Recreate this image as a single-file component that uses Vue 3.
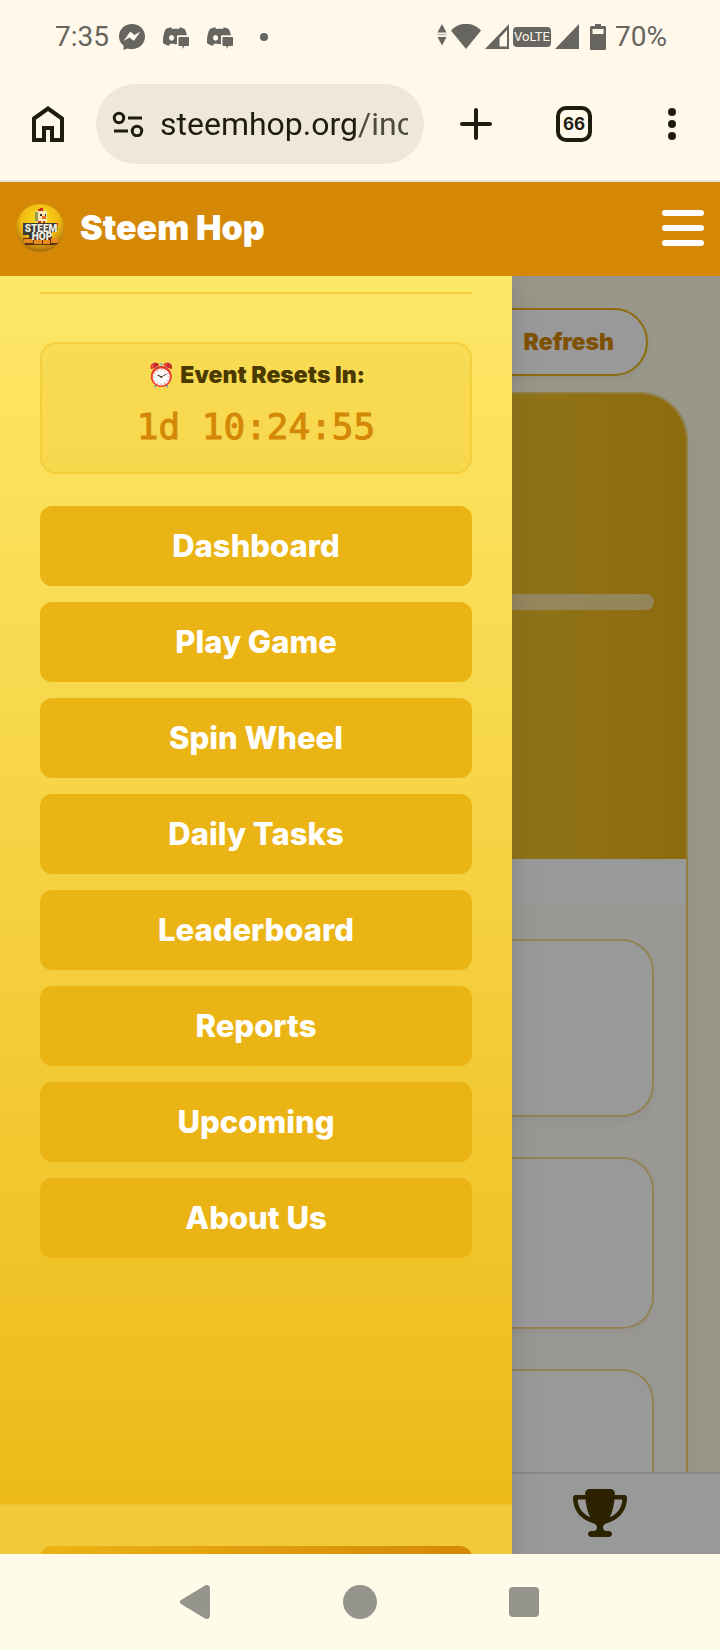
<script setup>
import { ref } from "vue";

const url = ref("steemhop.org/inc");
const menuOpen = ref(true);

const links = [
    "Dashboard",
    "Play Game",
    "Spin Wheel",
    "Daily Tasks",
    "Leaderboard",
    "Reports",
    "Upcoming",
    "About Us",
];
</script>

<template>
    <div class="phone">
        <div class="status">
            <div class="status-left">
                <span>7:35</span>
                <div class="notifications">
                    <svg width="26" height="26" viewBox="0 0 26 26">
                        <path
                            fill="currentColor"
                            d="M13 0C5.600 0 0 5.400 0 12.500c0 3.800 1.700 7 4.600 9.200V26l4-1.600c1.400.4 2.900.6 4.400.6 7.400 0 13-5.300 13-12.500S20.400 0 13 0z"
                        />
                        <path
                            fill="#fff8eb"
                            d="M4.500 17l6-8.500c.5-.6 1-.7 1.700-.2l3.300 2.700 6-3.500-6 8.500c-.5.6-1 .7-1.700.2L10.500 13.500z"
                        />
                    </svg>
                    <svg v-for="n in 2" :key="n" width="28" height="26" viewBox="0 0 28 26">
                        <path
                            fill="currentColor"
                            fill-rule="evenodd"
                            d="M9 3.500C6.500 4 4.800 5 4.800 5 2.800 8.500 1.800 13 2 19c1.500 1.600 4 2.500 6.200 2.600l1.200-2c1.600.4 4 .6 6.600.5v-7.600c0-.7.500-1.200 1.200-1.200H26C25.400 8.700 24.700 6.800 23.700 5 22 4.100 20.400 3.600 18.800 3.300l-.8 1.600c-2-.3-5-.3-7 0L10.400 3.300zM10.500 11a2.600 2.900 0 1 0 .1 0z"
                        />
                        <path fill="currentColor" d="M18.500 13H27c.7 0 1 .4 1 1v7c0 .6-.4 1-1 1h-3.500L21.500 25v-3h-3c-.6 0-1-.4-1-1v-7c0-.6.400-1 1-1z" />
                    </svg>
                    <svg width="30" height="26" viewBox="0 0 30 26">
                        <circle cx="15" cy="13" r="4" fill="currentColor" />
                    </svg>
                </div>
            </div>
            <div class="status-right">
                <svg width="10" height="26" viewBox="0 0 10 26" fill="currentColor">
                    <path d="M5 0l4.500 8.500h-9zM5 21.500L.5 13h9z" />
                    <path d="M.5 9.800h9v1.600h-9z" opacity=".4" />
                </svg>
                <svg width="30" height="26" viewBox="0 0 30 26" fill="currentColor">
                    <path d="M0 6.500C8-2.500 22-2.500 30 6.500L15 25z" />
                </svg>
                <svg width="24" height="26" viewBox="0 0 24 26">
                    <path fill="currentColor" fill-rule="evenodd" d="M24 0v25H0zM22 6l-7.500 8v8.500H22z" />
                </svg>
                <span class="volte">VoLTE</span>
                <svg width="24" height="26" viewBox="0 0 24 26">
                    <path fill="currentColor" d="M24 0v25H0z" />
                </svg>
                <svg width="28" height="26" viewBox="0 0 28 26">
                    <path
                        fill="currentColor"
                        fill-rule="evenodd"
                        d="M12 0h6v2h3.500c1 0 1.500.5 1.500 1.500v21c0 1-.5 1.500-1.500 1.500h-13C7.500 26 7 25.500 7 24.500v-21C7 2.500 7.500 2 8.500 2H12zM9.500 5v5h11V5z"
                    />
                </svg>
                <span>70%</span>
            </div>
        </div>

        <div class="toolbar">
            <button class="icon-btn" aria-label="Home">
                <svg width="32" height="36" viewBox="0 0 32 36" fill="none" stroke="currentColor" stroke-width="4">
                    <path d="M2 12.500L16 2.500l14 10V34H20V22h-8v12H2z" />
                </svg>
            </button>
            <label class="address">
                <svg width="32" height="26" viewBox="0 0 32 26" fill="none" stroke="currentColor" stroke-width="3">
                    <circle cx="7" cy="7" r="4.700" />
                    <circle cx="25" cy="20" r="4.700" />
                    <path d="M16 7h14M2 20h14" />
                </svg>
                <input v-model="url" type="text" aria-label="Address" />
            </label>
            <div class="actions">
                <button class="icon-btn" aria-label="New tab">
                    <svg width="32" height="32" viewBox="0 0 32 32" stroke="currentColor" stroke-width="4" stroke-linecap="round">
                        <path d="M16 2v28M2 16h28" />
                    </svg>
                </button>
                <button class="icon-btn"><span class="tab-count">66</span></button>
                <button class="icon-btn" aria-label="Menu">
                    <svg width="12" height="32" viewBox="0 0 12 32" fill="currentColor">
                        <circle cx="6" cy="4" r="4" />
                        <circle cx="6" cy="16" r="4" />
                        <circle cx="6" cy="28" r="4" />
                    </svg>
                </button>
            </div>
        </div>

        <header class="header">
            <svg class="logo" width="48" height="48" viewBox="0 0 48 48">
                <defs>
                    <radialGradient id="ball" cx=".5" cy=".35" r=".65">
                        <stop offset="0" stop-color="#ffe21c" />
                        <stop offset=".6" stop-color="#f0b912" />
                        <stop offset="1" stop-color="#a86c0c" />
                    </radialGradient>
                </defs>
                <circle cx="24" cy="24" r="24" fill="url(#ball)" />
                <path fill="#d42a1c" d="M22 5h2V4h3v3h-5z" />
                <path fill="#f6e7b4" d="M20 7h11v11H20z" />
                <path fill="#9a9a54" d="M19 8h3v9h-3z" />
                <path fill="#3a2a1a" d="M24 10h2v2h-2zM29 10h1v2h-1z" />
                <path fill="#e8731c" d="M26 12h4v3h-4z" />
                <path fill="#c4351c" d="M22 17h3v3h-3zM27 17h2v3h-2z" />
                <path fill="#3c3c34" d="M7 19h34v9h-5v8H13v-5H7z" />
                <path fill="#b53a20" d="M40 19h2v3h-2z" />
                <path fill="#5b8a32" d="M40 23h2v3h-2z" />
                <path fill="#5b3210" d="M7 34h35v6l-4 1H9z" />
                <path fill="#e88a1c" d="M8 35h9v4H8zM18 36h8v4h-8zM27 36h7v4h-7zM35 34h7v5h-7z" />
                <text x="25" y="28" text-anchor="middle" font-size="10">STEEM</text>
                <text x="26" y="36" text-anchor="middle" font-size="10">HOP</text>
            </svg>
            <h1>Steem Hop</h1>
            <button class="burger" aria-label="Toggle menu" @click="menuOpen = !menuOpen">
                <span></span>
                <span></span>
                <span></span>
            </button>
        </header>

        <div class="stage">
            <main class="page">
                <button class="refresh">Refresh</button>
                <section class="card">
                    <div class="hero">
                        <div class="progress"></div>
                    </div>
                    <div class="strip"></div>
                    <div class="panels">
                        <div class="panel tall"></div>
                        <div class="panel"></div>
                        <div class="panel"></div>
                    </div>
                </section>
            </main>

            <nav class="tabbar">
                <button aria-label="Leaderboard">
                    <svg width="54" height="48" viewBox="0 0 576 512" fill="currentColor">
                        <path
                            d="M400 0H176c-26.500 0-48.100 21.800-47.100 48.200c.2 5.300 .4 10.600 .7 15.800H24C10.700 64 0 74.700 0 88c0 92.600 33.500 157 78.500 200.700c44.300 43.100 98.300 64.800 138.100 75.800c23.400 6.500 39.400 26 39.400 45.600c0 20.900-17 37.900-37.900 37.900H192c-17.700 0-32 14.300-32 32s14.300 32 32 32H384c17.700 0 32-14.300 32-32s-14.300-32-32-32H357.900C337 448 320 431 320 410.100c0-19.600 15.900-39.200 39.400-45.600c39.900-11 93.900-32.700 138.200-75.800C542.500 245 576 180.600 576 88c0-13.300-10.700-24-24-24H446.400c.3-5.200 .5-10.400 .7-15.800C448.100 21.800 426.500 0 400 0zM48.900 112h84.400c9.100 90.100 29.200 150.300 51.900 190.600c-24.900-11-50.800-26.500-73.200-48.300c-32-31.100-58-76-63-142.300zM464.100 254.300c-22.400 21.800-48.300 37.300-73.200 48.300c22.700-40.300 42.800-100.500 51.900-190.600h84.400c-5.100 66.300-31.100 111.200-63 142.300z"
                        />
                    </svg>
                </button>
            </nav>

            <div v-if="menuOpen" class="overlay" @click="menuOpen = false"></div>

            <aside v-if="menuOpen" class="sidebar">
                <div class="sidebar-body">
                    <hr />
                    <div class="countdown">
                        <div class="countdown-label">⏰ Event Resets In:</div>
                        <div class="countdown-time">1d 10:24:55</div>
                    </div>
                    <nav class="links">
                        <button v-for="link in links" :key="link">{{ link }}</button>
                    </nav>
                </div>
                <div class="sidebar-footer">
                    <button aria-label="Account"></button>
                </div>
            </aside>
        </div>

        <div class="android-nav">
            <button aria-label="Back">
                <svg width="32" height="36" viewBox="0 0 32 36">
                    <path
                        fill="currentColor"
                        d="M1 16L25 1.500c2.500-1.200 5 0 5 3v27c0 3-2.500 4.200-5 3L1 20c-1.500-1-1.500-3 0-4z"
                    />
                </svg>
            </button>
            <button aria-label="Home"><span class="dot"></span></button>
            <button aria-label="Recent apps"><span class="square"></span></button>
        </div>
    </div>
</template>

<style>
    body {
        margin: 0;
    }
</style>

<style scoped>
    .phone {
        --gold: #ebb415;
        --amber: #d48806;
        --brown: #4a3a00;

        display: flex;
        flex-direction: column;
        height: 100vh;
        overflow: hidden;
        background: #fff8eb;
        font-family: Inter, "Liberation Sans", sans-serif;
    }
    .phone * {
        box-sizing: border-box;
    }
    svg {
        display: block;
        flex: none;
    }
    button {
        padding: 0;
        border: 0;
        background: none;
        color: inherit;
        font: inherit;
        cursor: pointer;
    }

    /* System status bar */
    .status {
        display: flex;
        flex: none;
        justify-content: space-between;
        align-items: center;
        height: 74px;
        padding: 0 53px 0 55px;
        color: #66655f;
        font: 28px/32px Roboto, sans-serif;
    }
    .status-left,
    .status-right,
    .notifications {
        display: flex;
        align-items: center;
    }
    .status-left {
        gap: 10px;
    }
    .notifications {
        gap: 16px;
    }
    .status-right {
        gap: 4px;
    }
    .volte {
        width: 38px;
        border-radius: 4px;
        background: #66655f;
        color: #fff8eb;
        font: 13px/20px Roboto, sans-serif;
        text-align: center;
    }

    /* Browser toolbar */
    .toolbar {
        display: flex;
        flex: none;
        align-items: center;
        height: 108px;
        padding-bottom: 6px;
        border-bottom: 2px solid #e7e2d6;
        color: #1e1c10;
    }
    .icon-btn {
        display: grid;
        place-items: center;
        min-width: 96px;
        height: 80px;
    }
    .address {
        display: flex;
        flex: 1;
        align-items: center;
        gap: 16px;
        min-width: 0;
        height: 80px;
        padding: 0 16px;
        border-radius: 40px;
        background: #eee7da;
    }
    .address input {
        flex: 1;
        min-width: 0;
        padding: 0;
        border: 0;
        outline: 0;
        background: linear-gradient(90deg, #1e1c10 198px, #4c4a3d 198px);
        background-clip: text;
        -webkit-text-fill-color: transparent;
        font: 32px/40px Roboto, sans-serif;
    }
    .actions {
        display: flex;
        gap: 2px;
        padding-left: 4px;
    }
    .tab-count {
        width: 36px;
        border: 4px solid currentColor;
        border-radius: 10px;
        font-size: 17px;
        font-weight: 700;
        line-height: 28px;
    }

    /* Site header */
    .header {
        display: flex;
        flex: none;
        align-items: center;
        height: 94px;
        padding: 0 16px 2px;
        background: var(--amber);
        color: #fff;
    }
    .logo text {
        fill: #f2f0e4;
        font-family: Roboto, sans-serif;
        font-weight: 900;
    }
    h1 {
        flex: 1;
        margin: 0 0 0 16px;
        font-size: 34px;
        font-weight: 900;
        line-height: 48px;
    }
    .burger {
        display: flex;
        flex-direction: column;
        gap: 9px;
        width: 42px;
    }
    .burger span {
        height: 6px;
        border-radius: 3px;
        background: #fff;
    }

    .stage {
        position: relative;
        display: flex;
        flex: 1;
        flex-direction: column;
        min-height: 0;
        overflow: hidden;
        background: #fffbe6;
    }

    /* Dimmed page behind the menu */
    .page {
        display: flex;
        flex: 1;
        flex-direction: column;
        min-height: 0;
        overflow: hidden;
        padding: 32px 32px 0;
    }
    .refresh {
        flex: none;
        align-self: flex-end;
        width: 192px;
        height: 68px;
        margin: 0 40px 16px 0;
        padding-right: 32px;
        border: 2px solid var(--gold);
        border-radius: 34px;
        background: #fff;
        box-shadow: 0 4px 8px rgba(0, 0, 0, 0.05);
        color: var(--amber);
        font-size: 23px;
        font-weight: 900;
        text-align: right;
    }
    .card {
        flex: none;
        overflow: hidden;
        border: 2px solid rgba(235, 180, 21, 0.6);
        border-radius: 48px;
        background: #fffdf6;
        box-shadow: 0 8px 24px rgba(0, 0, 0, 0.04);
    }
    .hero {
        height: 465px;
        padding: 200px 32px 0;
        background: linear-gradient(90deg, #fde768, var(--gold));
    }
    .progress {
        height: 16px;
        border-radius: 8px;
        background: rgba(255, 255, 255, 0.55);
    }
    .strip {
        height: 48px;
        background: #fff;
    }
    .panels {
        display: grid;
        gap: 40px;
        padding: 32px;
    }
    .panel {
        height: 172px;
        border: 2px solid rgba(235, 180, 21, 0.5);
        border-radius: 32px;
        background: #fff;
        box-shadow: 0 4px 8px rgba(0, 0, 0, 0.04);
    }
    .panel.tall {
        height: 178px;
    }
    .tabbar {
        display: grid;
        flex: none;
        grid-template-columns: repeat(3, 1fr);
        height: 82px;
        border-top: 2px solid #e5e5e5;
        background: #fff;
        color: var(--brown);
    }
    .tabbar button {
        display: grid;
        grid-column: 3;
        place-items: center;
        padding-bottom: 2px;
    }
    .overlay {
        position: absolute;
        inset: 0;
        background: rgba(0, 0, 0, 0.4);
    }

    /* Slide-in menu, runs on below the visible area */
    .sidebar {
        position: absolute;
        top: 0;
        bottom: -112px;
        left: 0;
        display: flex;
        flex-direction: column;
        width: 512px;
        max-width: 80%;
        background: linear-gradient(180deg, #fee868, #eab40f);
        box-shadow: 4px 0 24px rgba(0, 0, 0, 0.1);
    }
    .sidebar-body {
        flex: 1;
        padding: 16px 40px;
    }
    hr {
        height: 2px;
        margin: 0 0 48px;
        border: 0;
        background: rgba(235, 180, 21, 0.5);
    }
    .countdown {
        margin-bottom: 32px;
        padding: 16px;
        border: 2px solid rgba(235, 180, 21, 0.3);
        border-radius: 16px;
        background: rgba(235, 180, 21, 0.2);
        text-align: center;
    }
    .countdown-label {
        margin-bottom: 8px;
        color: var(--brown);
        font-size: 23px;
        font-weight: 900;
        line-height: 30px;
    }
    .countdown-time {
        color: var(--amber);
        font: 36px/58px "DejaVu Sans Mono", monospace;
        -webkit-text-stroke: 1px var(--amber);
    }
    .links {
        display: grid;
        gap: 16px;
    }
    .links button {
        height: 80px;
        padding-bottom: 2px;
        border-radius: 12px;
        background: var(--gold);
        color: #fff;
        font-size: 31px;
        font-weight: 800;
    }
    .sidebar-footer {
        padding: 40px;
        border-top: 2px solid rgba(235, 180, 21, 0.3);
        background: rgba(254, 232, 120, 0.35);
    }
    .sidebar-footer button {
        display: block;
        width: 100%;
        height: 80px;
        border-radius: 12px;
        background: linear-gradient(90deg, var(--gold), var(--amber));
    }

    /* Android navigation bar */
    .android-nav {
        display: flex;
        flex: none;
        justify-content: center;
        align-items: center;
        gap: 130px;
        height: 96px;
        background: #fffbe9;
        color: #96958d;
    }
    .android-nav button {
        display: grid;
        place-items: center;
        width: 34px;
    }
    .dot,
    .square {
        width: 34px;
        height: 34px;
        border-radius: 50%;
        background: currentColor;
    }
    .square {
        width: 30px;
        height: 30px;
        border-radius: 4px;
    }
</style>
